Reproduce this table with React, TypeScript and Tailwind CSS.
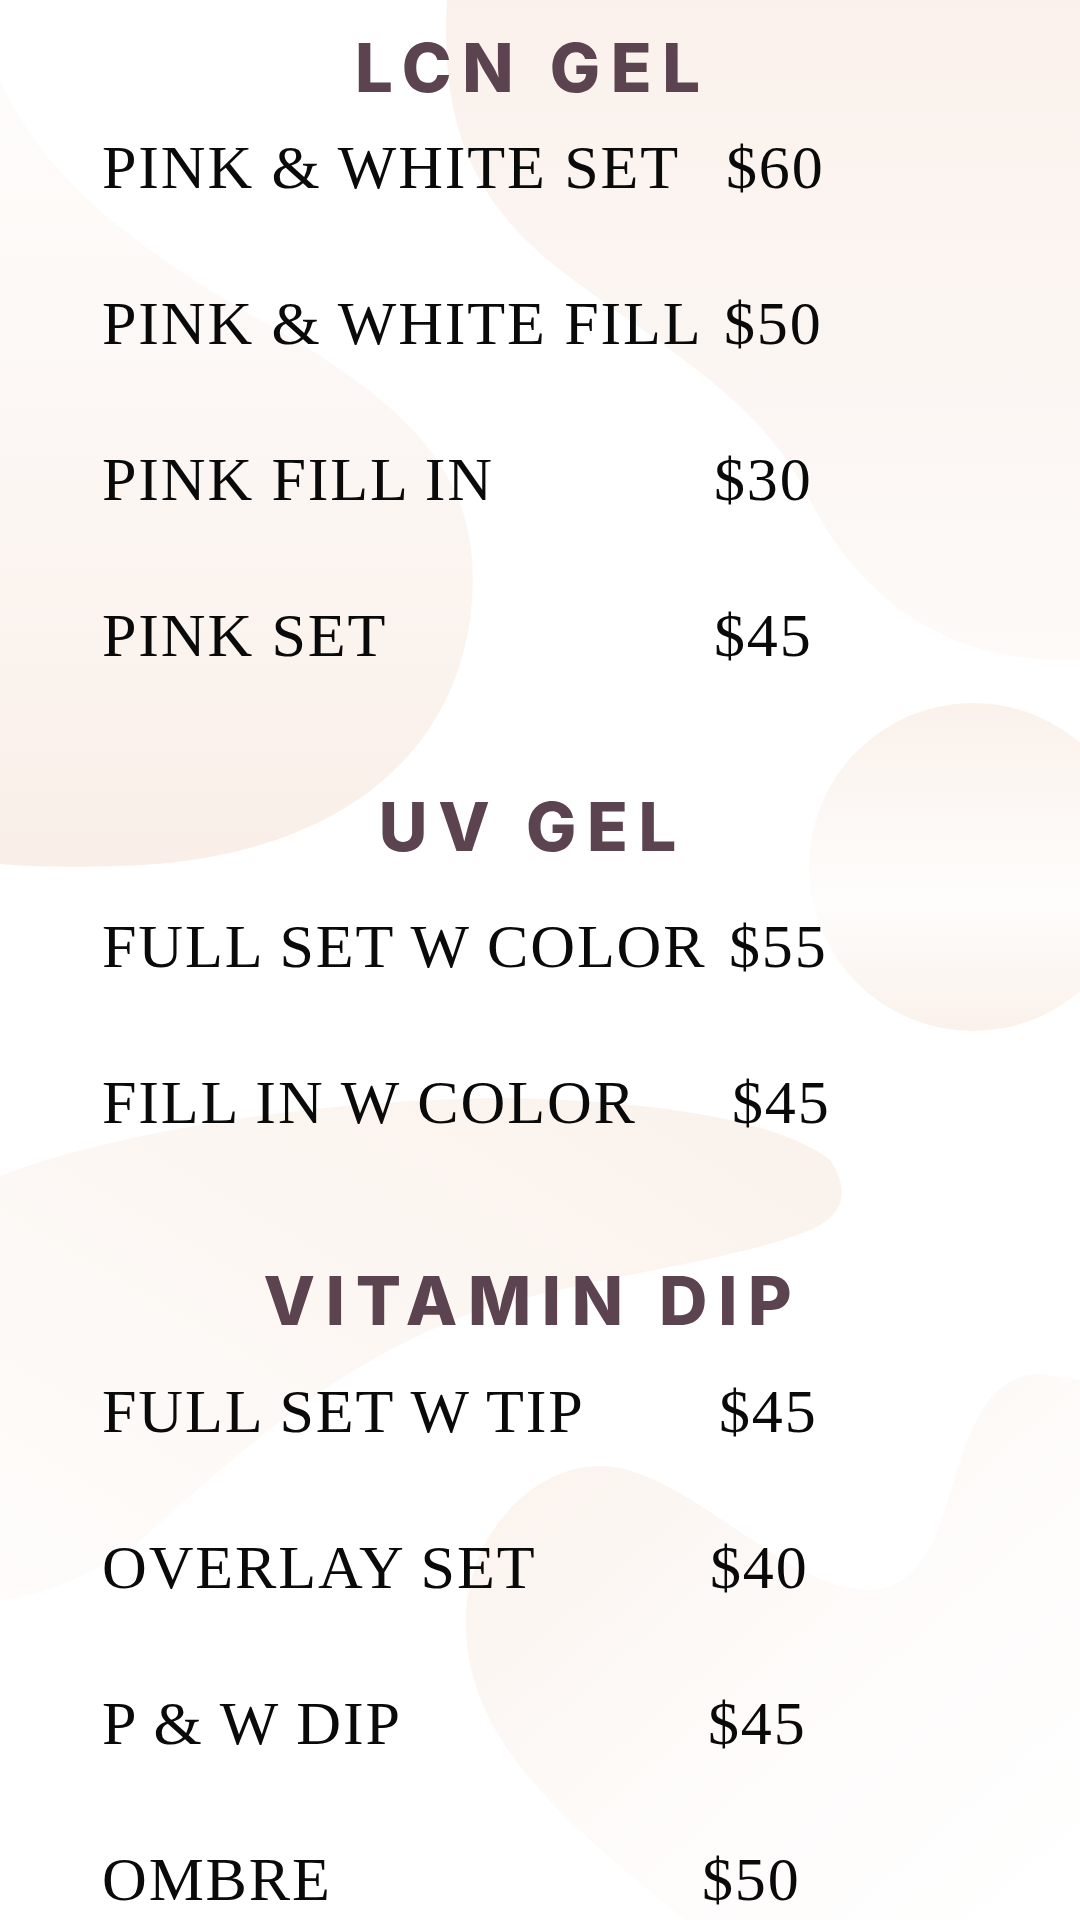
import React from "react";

type Item = { name: string; price: string; gap: string };

const lcn: Item[] = [
  { name: "PINK & WHITE SET", price: "$60", gap: "ml-[24px]" },
  { name: "PINK & WHITE FILL", price: "$50", gap: "ml-[22px]" },
  { name: "PINK FILL IN", price: "$30", gap: "ml-[12px]" },
  { name: "PINK SET", price: "$45", gap: "ml-[12px]" },
];
const uv: Item[] = [
  { name: "FULL SET W COLOR", price: "$55", gap: "ml-[27px]" },
  { name: "FILL IN W COLOR", price: "$45", gap: "ml-[30px]" },
];
const dip: Item[] = [
  { name: "FULL SET W TIP", price: "$45", gap: "ml-[17px]" },
  { name: "OVERLAY SET", price: "$40", gap: "ml-[8px]" },
  { name: "P & W DIP", price: "$45", gap: "ml-[6px]" },
  { name: "OMBRE", price: "$50", gap: "ml-[0px]" },
];

function Row({ item }: { item: Item }) {
  return (
    <div className="flex h-[156px] items-start pl-[102px] pt-[1px] text-[62px] leading-none text-[#0a0a0a] font-['Liberation_Serif',serif] tracking-[0.03em] whitespace-nowrap">
      <span className="w-[600px]">{item.name}</span>
      <span className={item.gap}>{item.price}</span>
    </div>
  );
}

function Heading({ children, cls }: { children: React.ReactNode; cls: string }) {
  return (
    <h2
      className={`h-[67px] text-center text-[67px] leading-none font-extrabold tracking-[0.16em] text-[#5c4350] font-['Inter',sans-serif] pr-[14px] ${cls}`}
    >
      {children}
    </h2>
  );
}

function Background() {
  return (
    <svg className="absolute inset-0 h-full w-full" viewBox="0 0 1080 1920" preserveAspectRatio="none">
      <defs>
        <linearGradient id="gA" x1="0" y1="0" x2="0" y2="1">
          <stop offset="0" stopColor="#faf1ec" />
          <stop offset="1" stopColor="#fdfaf8" />
        </linearGradient>
        <linearGradient id="gB" x1="0" y1="0" x2="0" y2="1">
          <stop offset="0" stopColor="#fefcfb" />
          <stop offset="0.45" stopColor="#fcf7f4" />
          <stop offset="1" stopColor="#f9efe8" />
        </linearGradient>
        <linearGradient id="gC" x1="0" y1="0" x2="0" y2="1">
          <stop offset="0" stopColor="#faf1eb" />
          <stop offset="0.6" stopColor="#fefdfc" />
          <stop offset="1" stopColor="#faf1eb" />
        </linearGradient>
        <linearGradient id="gD" x1="1" y1="0" x2="0" y2="1">
          <stop offset="0" stopColor="#faf1eb" />
          <stop offset="0.5" stopColor="#fcf7f3" />
          <stop offset="1" stopColor="#fefcfb" />
        </linearGradient>
        <linearGradient id="gE" x1="0" y1="0" x2="1" y2="1">
          <stop offset="0" stopColor="#faf1eb" />
          <stop offset="0.6" stopColor="#fefcfb" />
          <stop offset="1" stopColor="#ffffff" />
        </linearGradient>
      </defs>
      <path d="M447,0 C440,120 470,200 560,270 C680,360 760,400 810,500 C860,600 950,665 1080,660 L1080,0 Z" fill="url(#gA)" />
      <path d="M0,80 C40,170 120,240 260,320 C420,410 480,480 472,600 C460,760 330,860 120,866 C60,868 20,866 0,864 Z" fill="url(#gB)" />
      <circle cx="973" cy="867" r="164" fill="url(#gC)" />
      <path d="M0,1176 C120,1130 320,1100 500,1098 C650,1100 780,1120 830,1160 C850,1190 845,1215 810,1230 C740,1260 600,1275 480,1310 C340,1360 240,1450 130,1550 C80,1580 40,1595 0,1600 Z" fill="url(#gD)" />
      <path d="M686,1920 C560,1820 470,1740 466,1630 C462,1540 530,1466 600,1466 C660,1466 730,1530 800,1570 C880,1610 920,1590 945,1510 C970,1420 990,1375 1040,1374 L1080,1380 L1080,1920 Z" fill="url(#gE)" />
    </svg>
  );
}

export default function App() {
  return (
    <div className="relative h-[1920px] w-[1080px] overflow-hidden bg-white">
      <Background />
      <div className="relative flex flex-col pt-[34px]">
        <Heading cls="mb-[34px]">LCN GEL</Heading>
        {lcn.map((it) => (
          <Row key={it.name} item={it} />
        ))}
        <Heading cls="mt-[34px] mb-[54px]">UV GEL</Heading>
        {uv.map((it) => (
          <Row key={it.name} item={it} />
        ))}
        <Heading cls="mt-[41px] mb-[45px]">VITAMIN DIP</Heading>
        {dip.map((it) => (
          <Row key={it.name} item={it} />
        ))}
      </div>
    </div>
  );
}
